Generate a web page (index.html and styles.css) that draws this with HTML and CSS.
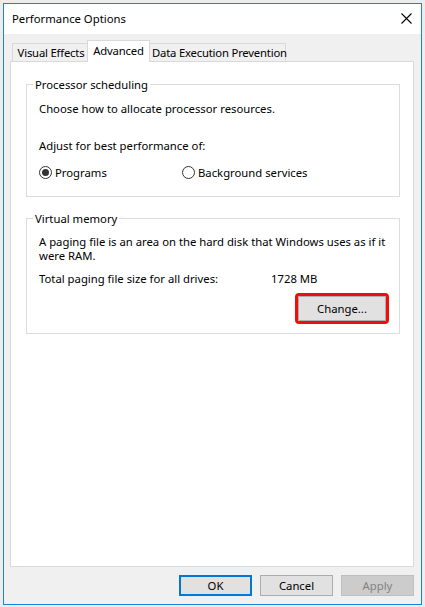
FILE: index.html
```html
<!DOCTYPE html>
<html>
<head>
<meta charset="utf-8">
<link rel="stylesheet" href="styles.css">
</head>
<body>
<div class="window">
  <div class="titlebar">
    <span class="title">Performance Options</span>
    <svg class="close" width="11" height="11" viewBox="0 0 11 11"><path d="M0.5 0.5L10.5 10.5M10.5 0.5L0.5 10.5" stroke="#000" stroke-width="1.1" fill="none"/></svg>
  </div>
  <div class="content">
    <div class="tabs">
      <div class="tab tab-first">Visual Effects</div>
      <div class="tab tab-active">Advanced</div>
      <div class="tab tab-last">Data Execution Prevention</div>
    </div>
    <div class="panel">
      <fieldset class="group group-cpu">
        <legend>Processor scheduling</legend>
        <p class="choose">Choose how to allocate processor resources.</p>
        <p class="adjust">Adjust for best performance of:</p>
        <div class="radios">
          <label class="radio"><span class="dot checked"></span>Programs</label>
          <label class="radio"><span class="dot"></span>Background services</label>
        </div>
      </fieldset>
      <fieldset class="group group-vm">
        <legend>Virtual memory</legend>
        <p class="para">A paging file is an area on the hard disk that Windows uses as if it<br>were RAM.</p>
        <div class="total"><span>Total paging file size for all drives:</span><span>1728 MB</span></div>
        <div class="change-row"><button class="btn change">Change...</button></div>
      </fieldset>
    </div>
    <div class="actions">
      <button class="btn ok">OK</button>
      <button class="btn cancel">Cancel</button>
      <button class="btn apply">Apply</button>
    </div>
  </div>
</div>
</body>
</html>
```

FILE: styles.css
```css
html, body {
  margin: 0;
  padding: 0;
}
body {
  background: #ececec;
  font-family: "Noto Sans", "Open Sans", sans-serif;
  font-size: 11.3px;
  color: #000;
  padding: 3px 3px 2px 3px;
}
.window {
  width: 419px;
  height: 602px;
  box-sizing: border-box;
  border: 1px solid #1883d7;
  background: #f0f0f0;
  display: flex;
  flex-direction: column;
}
.titlebar {
  height: 30px;
  flex: none;
  background: #fff;
  display: flex;
  align-items: center;
  justify-content: space-between;
  padding: 0 9px 0 8px;
}
.title {
  line-height: 15px;
  padding-bottom: 1px;
}
.close {
  display: block;
  margin-bottom: 1px;
}
.content {
  flex: 1;
  display: flex;
  flex-direction: column;
  padding: 6px 7px 0 6px;
}
.tabs {
  height: 21px;
  display: flex;
  align-items: flex-end;
  padding-left: 2px;
}
.tab {
  box-sizing: border-box;
  height: 18px;
  line-height: 17px;
  text-align: center;
  white-space: nowrap;
  letter-spacing: -0.2px;
  border-top: 1px solid #d9d9d9;
  background: #f0f0f0;
}
.tab-first {
  width: 75px;
  border-left: 1px solid #d9d9d9;
  padding-left: 2px;
}
.tab-active {
  width: 63px;
  height: 22px;
  margin-bottom: -1px;
  line-height: 15px;
  padding-top: 2px;
  background: #fff;
  border: 1px solid #d9d9d9;
  border-bottom: none;
  position: relative;
  z-index: 1;
}
.tab-last {
  width: 136px;
  border-right: 1px solid #d9d9d9;
  padding-left: 2px;
}
.panel {
  height: 506px;
  box-sizing: border-box;
  background: #fff;
  border: 1px solid #d9d9d9;
  display: flex;
  flex-direction: column;
}
.group {
  border: 1px solid #dcdcdc;
  margin: 0 13px 0 15px;
  padding: 0 12px;
  min-width: 0;
}
.group legend {
  padding: 0 2px;
  margin-left: -6px;
  line-height: 15px;
}
.group p {
  margin: 0;
  line-height: 15px;
}
.group-cpu {
  margin-top: 15px;
  padding-bottom: 16px;
}
.choose {
  margin-top: 9px !important;
}
.adjust {
  margin-top: 22px !important;
}
.radios {
  margin-top: 12px;
  display: grid;
  grid-template-columns: 143px auto;
  line-height: 15px;
}
.radio {
  display: flex;
  align-items: center;
  gap: 3px;
}
.dot {
  width: 13px;
  height: 13px;
  box-sizing: border-box;
  border: 1px solid #333;
  border-radius: 50%;
  display: flex;
  align-items: center;
  justify-content: center;
  background: #fff;
}
.dot.checked::after {
  content: "";
  width: 7px;
  height: 7px;
  border-radius: 50%;
  background: #333;
}
.group-vm {
  margin-top: 14px;
  padding-bottom: 12px;
}
.para {
  margin-top: 9px !important;
  line-height: 14px !important;
  white-space: nowrap;
}
.total {
  margin-top: 8px;
  display: grid;
  grid-template-columns: 232px auto;
  line-height: 15px;
}
.change-row {
  margin-top: 10px;
  display: flex;
  justify-content: flex-end;
  padding-right: 1px;
}
.btn {
  font-family: inherit;
  font-size: inherit;
  color: #000;
  box-sizing: border-box;
  background: #e1e1e1;
  border: 1px solid #adadad;
  padding: 0;
  margin: 0;
  border-radius: 0;
  line-height: 15px;
}
.change {
  width: 88px;
  height: 25px;
  outline: 3px solid #f20d0d;
  border-radius: 1px;
}
.actions {
  margin-top: 8px;
  display: flex;
  justify-content: flex-end;
  gap: 8px;
  padding-right: 0;
}
.actions .btn {
  width: 73px;
  height: 21px;
}
.ok {
  border: 2px solid #0078d7;
}
.apply {
  background: #cccccc;
  border-color: #bfbfbf;
  color: #838383;
}
```
